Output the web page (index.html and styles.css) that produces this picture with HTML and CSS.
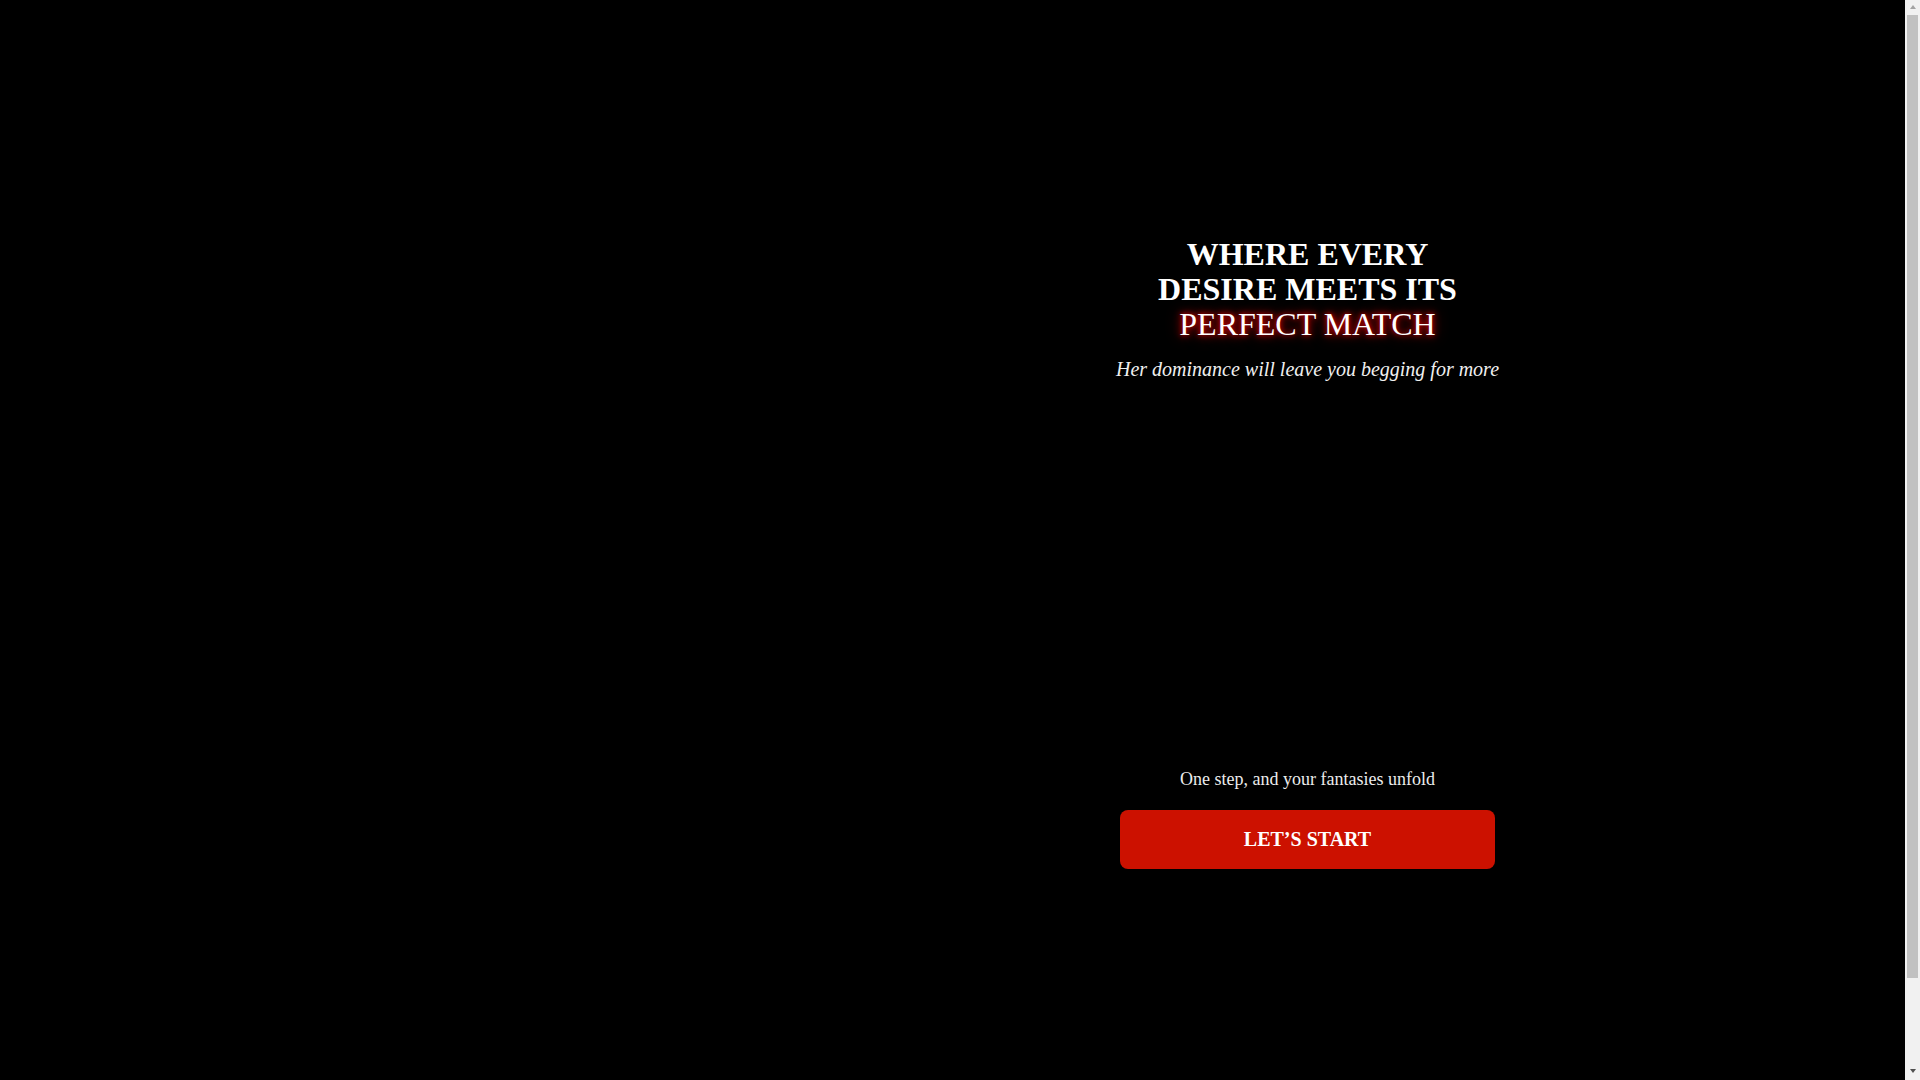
FILE: index.html
```html
<!DOCTYPE html>
<html lang="en">
<head>
<meta charset="utf-8">
<title>Where every desire meets its perfect match</title>
<link rel="stylesheet" href="styles.css">
</head>
<body>
<main class="hero">
  <div class="hero-visual"></div>
  <section class="hero-content">
    <h1 class="title">WHERE EVERY<br>DESIRE MEETS ITS<span class="title-accent">PERFECT MATCH</span></h1>
    <p class="subtitle">Her dominance will leave you begging for more</p>
    <div class="media"></div>
    <p class="lead">One step, and your fantasies unfold</p>
    <a class="cta" href="#">LET’S START</a>
  </section>
</main>
<div class="scrollbar" aria-hidden="true">
  <span class="sb-arrow sb-up"></span>
  <span class="sb-track"><span class="sb-thumb"></span></span>
  <span class="sb-arrow sb-down"></span>
</div>
</body>
</html>
```
FILE: styles.css
```css
html, body {
  margin: 0;
  padding: 0;
  background: #000;
}
body {
  font-family: "Liberation Serif", "Times New Roman", serif;
  color: #fff;
  padding-right: 15px;
}
.hero {
  display: grid;
  grid-template-columns: 1fr 1fr;
  max-width: 1420px;
  margin: 0 auto;
  min-height: 1178px;
}
.hero-visual {
  background: #000;
}
.hero-content {
  display: flex;
  flex-direction: column;
  align-items: center;
  padding-top: 237px;
  text-align: center;
}
.title {
  margin: 0;
  font-size: 32px;
  line-height: 35px;
  font-weight: bold;
  color: #fff;
}
.title-accent {
  display: block;
  font-weight: normal;
  color: #fff;
  text-shadow: 0 0 5px #d80000, 0 0 10px #a80000, 0 0 16px #700000;
}
.subtitle {
  margin: 16px 0 0;
  font-size: 20px;
  font-style: italic;
  color: #f0f0f0;
}
.media {
  height: 388px;
}
.lead {
  margin: 0;
  font-size: 18px;
  color: #ececec;
}
.cta {
  display: flex;
  align-items: center;
  justify-content: center;
  margin-top: 20px;
  width: 375px;
  height: 59px;
  box-sizing: border-box;
  background: #cc1100;
  border-radius: 8px;
  color: #fff;
  font-size: 20px;
  font-weight: bold;
  text-decoration: none;
}

/* browser scrollbar */
.scrollbar {
  position: fixed;
  top: 0;
  right: 0;
  width: 15px;
  height: 100vh;
  background: #f1f1f1;
  display: flex;
  flex-direction: column;
}
.sb-arrow {
  flex: 0 0 15px;
  display: flex;
  justify-content: center;
}
.sb-up {
  align-items: flex-start;
  padding-top: 5px;
  box-sizing: border-box;
}
.sb-down {
  align-items: flex-end;
  padding-bottom: 7px;
  box-sizing: border-box;
}
.sb-up::before,
.sb-down::before {
  content: "";
  width: 0;
  height: 0;
  border-left: 3.5px solid transparent;
  border-right: 3.5px solid transparent;
}
.sb-up::before {
  border-bottom: 4px solid #a3a3a3;
}
.sb-down::before {
  border-top: 4px solid #505050;
}
.sb-track {
  flex: 1;
  padding: 0 2px;
  display: flex;
  flex-direction: column;
}
.sb-thumb {
  height: 963px;
  background: #c1c1c1;
}
```
